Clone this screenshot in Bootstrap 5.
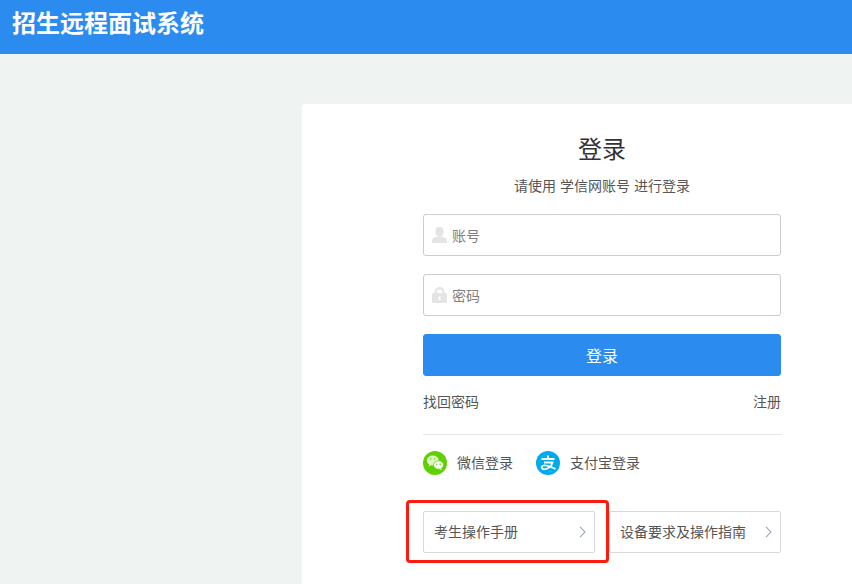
<!DOCTYPE html>
<html lang="zh">
<head>
<meta charset="utf-8">
<title>招生远程面试系统</title>
<link rel="stylesheet" href="https://cdn.jsdelivr.net/npm/bootstrap@5.3.0/dist/css/bootstrap.min.css">
<style>
html,body{height:584px;overflow:hidden}
body{background:#eff3f2;font-family:"Liberation Sans","Noto Sans CJK SC",sans-serif;color:#555}
.top-bar{height:54px;background:#2b8bef;padding:8px 12px 0}
.top-title{font-size:24px;line-height:32px;font-weight:700;color:#fff;margin:0}
.login-panel{margin:50px 0 0 302px;height:480px;background:#fff;border-radius:3px 0 0 0;padding:30px 71px 0 121px}
.login-title{font-size:24px;line-height:32px;font-weight:400;color:#333;margin:0 0 10px;text-align:center}
.login-sub{font-size:14px;line-height:20px;color:#555;text-align:center;margin:0 0 18px}
.field-box{height:42px;border:1px solid #ccc;border-radius:3px;padding:0 8px;margin-bottom:18px;gap:5px}
.field-box svg{flex:none}
.field-box input{border:0;outline:0;padding:2px 0 0;flex:1;min-width:0;font-size:14px;color:#555;font-family:inherit}
.field-box input::placeholder{color:#808080;opacity:1}
.login-btn{height:42px;width:100%;background:#2b8bef;border-color:#2b8bef;color:#fff;font-size:16px;border-radius:3px;padding:3px 0 0}
.login-links{font-size:14px;line-height:20px;margin-top:16px;padding-bottom:22px;border-bottom:1px solid #e5e5e5}
.login-links a,.social-link,.guide-link{color:#555;text-decoration:none}
.social-row{margin-top:15px;gap:23px;font-size:14px;height:26px}
.social-link{gap:10px}
.guide-row{margin-top:35px;gap:14px}
.guide-link{flex:0 0 172px;height:42px;border:1px solid #d9d9d9;border-radius:2px;font-size:14px;padding:0 8px 0 10px}
.highlight-wrap{position:relative}
.highlight-box{position:absolute;left:-17px;top:-11px;width:203px;height:63px;border:3px solid #fb1c0f;border-radius:4px;pointer-events:none}
</style>
</head>
<body>
<header class="top-bar"><h1 class="top-title">招生远程面试系统</h1></header>
<main class="login-panel">
  <h2 class="login-title">登录</h2>
  <p class="login-sub">请使用 学信网账号 进行登录</p>
  <form>
    <div class="field-box d-flex align-items-center">
      <svg width="15" height="16" viewBox="0 0 15 16"><rect x="3.500" y="0" width="8" height="9" rx="3.600" fill="#e4e4e4"/><path d="M0 16v-3c0-1.500 3-2.600 5-3.500h5c2 .9 5 2 5 3.500v3z" fill="#e4e4e4"/></svg>
      <input type="text" placeholder="账号" aria-label="账号">
    </div>
    <div class="field-box d-flex align-items-center">
      <svg width="15" height="16" viewBox="0 0 15 16"><path d="M2.500 7V5a5 5 0 0 1 10 0v2h-2.200V5a2.800 2.800 0 0 0-5.600 0v2z" fill="#e4e4e4"/><path fill-rule="evenodd" d="M1.500 6h12A1.500 1.500 0 0 1 15 7.500v7a1.500 1.500 0 0 1-1.500 1.500h-12A1.500 1.500 0 0 1 0 14.500v-7A1.500 1.500 0 0 1 1.500 6zM6.500 9.500v3.500h2V9.500z" fill="#e4e4e4"/></svg>
      <input type="password" placeholder="密码" aria-label="密码">
    </div>
    <button type="button" class="btn login-btn">登录</button>
  </form>
  <div class="login-links d-flex justify-content-between"><a href="#">找回密码</a><a href="#">注册</a></div>
  <div class="social-row d-flex align-items-center">
    <a href="#" class="social-link d-flex align-items-center">
      <svg width="24" height="24" viewBox="0 0 24 24"><circle cx="12" cy="12" r="12" fill="#5fd000"/><ellipse cx="9.800" cy="9.500" rx="6" ry="5" fill="#fff" fill-opacity=".8"/><path d="M6.500 13l-1 2.500 3-1.500z" fill="#fff" fill-opacity=".8"/><ellipse cx="15.500" cy="14" rx="5" ry="4.200" fill="#fff" stroke="#5fd000" stroke-width=".8"/><path d="M18 17.500l1 1.800-2.800-1.200z" fill="#fff"/><circle cx="13.800" cy="13.300" r=".8" fill="#5fd000"/><circle cx="17.200" cy="13.300" r=".8" fill="#5fd000"/><circle cx="7.800" cy="8" r=".8" fill="#5fd000"/><circle cx="11.600" cy="8" r=".8" fill="#5fd000"/></svg>
      <span>微信登录</span>
    </a>
    <a href="#" class="social-link d-flex align-items-center">
      <svg width="24" height="24" viewBox="0 0 24 24"><circle cx="12" cy="12" r="12" fill="#00aaee"/><path d="M5.500 8h13M12 4.500V8M8 11.500h8.500c-1 4-4.500 6.800-8.500 6.800-2.800 0-3.300-3-.5-3.800 3-.8 7.500 1.300 12 3.500" fill="none" stroke="#fff" stroke-width="1.800"/></svg>
      <span>支付宝登录</span>
    </a>
  </div>
  <div class="guide-row d-flex">
    <div class="highlight-wrap d-flex">
      <a href="#" class="guide-link d-flex align-items-center justify-content-between"><span>考生操作手册</span><svg width="7" height="12" viewBox="0 0 7 12"><path d="M1 .8l5 5.200-5 5.200" fill="none" stroke="#9aa7bd" stroke-width="1.100"/></svg></a>
      <div class="highlight-box"></div>
    </div>
    <a href="#" class="guide-link d-flex align-items-center justify-content-between"><span>设备要求及操作指南</span><svg width="7" height="12" viewBox="0 0 7 12"><path d="M1 .8l5 5.200-5 5.200" fill="none" stroke="#9aa7bd" stroke-width="1.100"/></svg></a>
  </div>
</main>
<script src="https://cdn.jsdelivr.net/npm/bootstrap@5.3.0/dist/js/bootstrap.bundle.min.js"></script>
</body>
</html>
